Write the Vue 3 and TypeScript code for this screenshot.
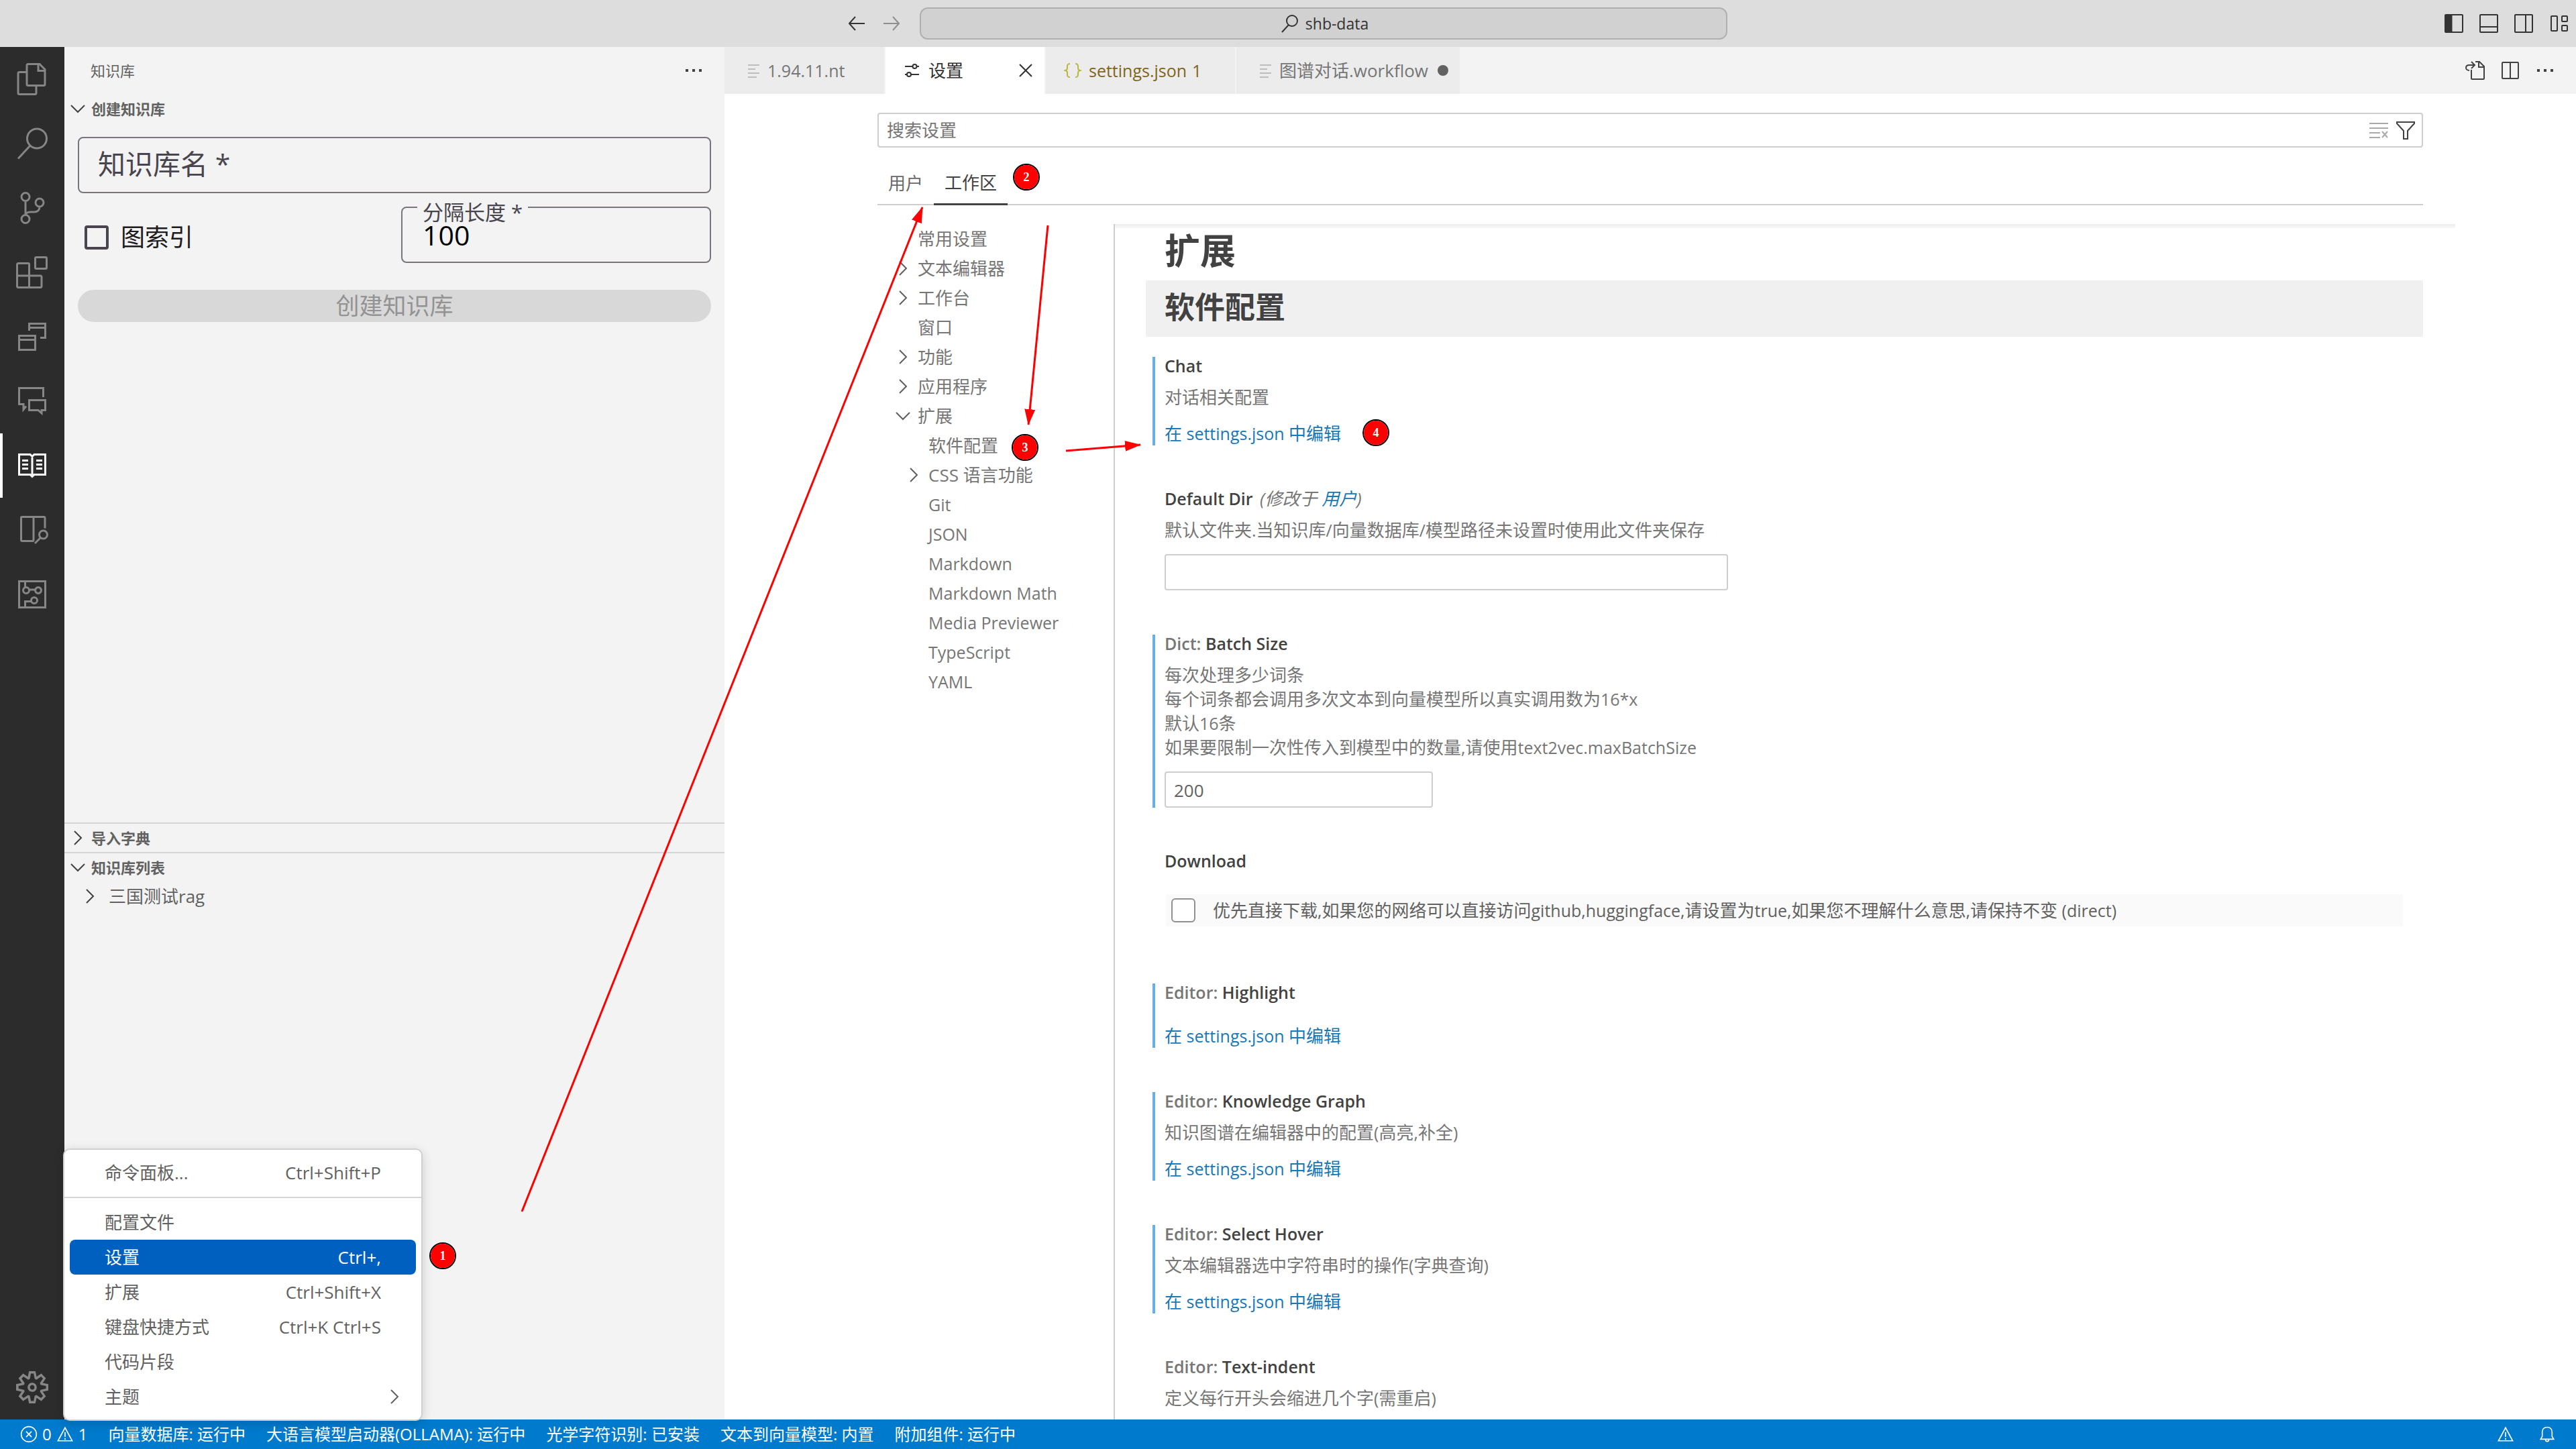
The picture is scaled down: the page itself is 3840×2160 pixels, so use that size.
<script setup lang="ts">
import { ref } from 'vue'

interface ActivityItem {
  name: string
  d: string
  active?: boolean
}
interface TocItem {
  label: string
  level: number
  state?: 'open' | 'closed'
}
interface Setting {
  id: string
  category?: string
  title: string
  scope?: string
  lines: string[]
  modified: boolean
  kind: 'link' | 'text' | 'number' | 'checkbox' | 'none'
}
interface Run {
  text: string
  latin: boolean
}

const ring = (x: number, y: number, r: number): string =>
  `M${x - r} ${y}a${r} ${r} 0 1 0 ${2 * r} 0a${r} ${r} 0 1 0 ${-2 * r} 0`

// Latin runs are set one size smaller than the Chinese around them
const runs = (text: string): Run[] =>
  (text.match(/[\x20-\x7e]+|[^\x20-\x7e]+/g) ?? []).map((part) => ({
    text: part,
    latin: /^[\x20-\x7e]/.test(part),
  }))
const isLatin = (text: string): boolean => /^[\x20-\x7e]+$/.test(text)

const activities: ActivityItem[] = [
  {
    name: '资源管理器',
    d: 'M18 1.5h17l8 8v22a2 2 0 0 1-2 2H18a2 2 0 0 1-2-2v-28a2 2 0 0 1 2-2zM33 1.5v10h10M16 13.5H5a2 2 0 0 0-2 2v29a2 2 0 0 0 2 2h23a2 2 0 0 0 2-2v-11',
  },
  { name: '搜索', d: ring(31, 16.5, 14.5) + 'M21 27L3 46.5' },
  {
    name: '源代码管理',
    d: ring(14, 7.5, 6) + ring(14, 40.5, 6) + ring(35, 16, 6) + 'M14 13.5v21M35 22c0 5-3 8-8 8h-6c-4 0-7 2-7 5',
  },
  {
    name: '扩展',
    d: 'M30 1.5h14a1.5 1.5 0 0 1 1.500 1.500v14a1.500 1.500 0 0 1-1.500 1.500H30a1.500 1.500 0 0 1-1.500-1.500V3a1.500 1.500 0 0 1 1.500-1.500zM3 10.500h15a1.500 1.500 0 0 1 1.500 1.500v17H36a2 2 0 0 1 2 2v13.500a2 2 0 0 1-2 2H3.500a2 2 0 0 1-2-2V12a1.500 1.500 0 0 1 1.500-1.500zM1.500 29h18v17.500',
  },
  {
    name: '窗口',
    d: 'M4.500 22.500h24v21h-24zM4.500 28.500h24M19.500 15V4.500h24v21H36M19.500 10.500h24',
  },
  {
    name: '评论',
    d: 'M40.500 18V4.500h-36v24H11v8l4-5M19.500 22.500h24v15H38v4.500l-5-4.500H19.500z',
  },
  {
    name: '知识库',
    active: true,
    d: 'M4.500 7.500h16.500l3 3 3-3h16.500v30H27l-3 3-3-3H4.500zM24 10v29M9 16.500h9M9 22.500h9M9 28.500h9M30 16.500h9M30 22.500h9M30 28.500h9',
  },
  {
    name: '知识检索',
    d: 'M26.500 40.500H9a1.500 1.500 0 0 1-1.500-1.500V6A1.500 1.500 0 0 1 9 4.500h32.500A1.500 1.500 0 0 1 43 6v15.500M26 4.500v36' + ring(40.5, 31, 6) + 'M36 36l-8 8',
  },
  {
    name: '知识图谱',
    d: 'M4.500 4.500h39v39h-39z' + ring(15, 18, 4.5) + ring(33, 18, 4.5) + ring(27, 33, 4.5) + 'M13.500 4.500v9M19.500 17h9M13.500 43.500V34.500h9',
  },
]

const gear =
  'M19.85 8.75l4.15.83v4.84l-4.15.83 2.35 3.52-3.43 3.43-3.52-2.35-.83 4.15H9.58l-.83-4.15-3.52 2.35-3.43-3.43 2.35-3.52L0 14.42V9.58l4.15-.83L1.8 5.23 5.23 1.8l3.52 2.35L9.58 0h4.84l.83 4.15 3.52-2.35 3.43 3.43-2.35 3.52zm-1.57 5.07l4-.81v-2l-4-.81-.54-1.3 2.29-3.43-1.43-1.43-3.43 2.29-1.3-.54-.81-4h-2l-.81 4-1.3.54-3.43-2.29-1.43 1.43L6.38 8.9l-.54 1.3-4 .81v2l4 .81.54 1.3-2.29 3.43 1.43 1.43 3.43-2.29 1.3.54.81 4h2l.81-4 1.3-.54 3.43 2.29 1.43-1.43-2.29-3.43.54-1.3zm-8.186-4.672A3.43 3.43 0 0 1 12 8.57 3.44 3.44 0 0 1 15.43 12a3.43 3.43 0 1 1-5.336-2.852zm.956 4.274c.281.188.612.288.95.288A1.7 1.7 0 0 0 13.71 12a1.71 1.71 0 1 0-2.66 1.422z'

const chevronRight = 'M11 6l10 10-10 10'
const chevronDown = 'M6 11l10 10 10-10'
const dots = 'M4 16h4M14 16h4M24 16h4'
const warning = 'M16 4L3 28h26zM16 12v9M16 23v3'

const layoutIcons = [
  { name: '切换主侧栏', d: 'M4 3h24a1 1 0 0 1 1 1v24a1 1 0 0 1-1 1H4a1 1 0 0 1-1-1V4a1 1 0 0 1 1-1zM8 3v26M5 3v26M11 3v26M12.500 3v26M6.500 3v26M9.500 3v26' },
  { name: '切换面板', d: 'M4 3h24a1 1 0 0 1 1 1v24a1 1 0 0 1-1 1H4a1 1 0 0 1-1-1V4a1 1 0 0 1 1-1zM3 21h26' },
  { name: '切换辅助侧栏', d: 'M4 3h24a1 1 0 0 1 1 1v24a1 1 0 0 1-1 1H4a1 1 0 0 1-1-1V4a1 1 0 0 1 1-1zM19 3v26' },
  { name: '自定义布局', d: 'M6 5h7a1 1 0 0 1 1 1v20a1 1 0 0 1-1 1H6a1 1 0 0 1-1-1V6a1 1 0 0 1 1-1zM22 5h6a1 1 0 0 1 1 1v6a1 1 0 0 1-1 1h-6a1 1 0 0 1-1-1V6a1 1 0 0 1 1-1zM22 19h6a1 1 0 0 1 1 1v6a1 1 0 0 1-1 1h-6a1 1 0 0 1-1-1v-6a1 1 0 0 1 1-1z' },
]

const textLines = 'M11 8h17M11 14h11M11 20h17M11 26h13'
const tabs = [
  { label: '1.94.11.nt', kind: 'lines', width: 240 },
  { label: '设置', kind: 'active', width: 239 },
  { label: 'settings.json', kind: 'json', width: 284, count: 1 },
  { label: '图谱对话.workflow', kind: 'dirty', width: 335 },
]

const toc: TocItem[] = [
  { label: '常用设置', level: 0 },
  { label: '文本编辑器', level: 0, state: 'closed' },
  { label: '工作台', level: 0, state: 'closed' },
  { label: '窗口', level: 0 },
  { label: '功能', level: 0, state: 'closed' },
  { label: '应用程序', level: 0, state: 'closed' },
  { label: '扩展', level: 0, state: 'open' },
  { label: '软件配置', level: 1 },
  { label: 'CSS 语言功能', level: 1, state: 'closed' },
  { label: 'Git', level: 1 },
  { label: 'JSON', level: 1 },
  { label: 'Markdown', level: 1 },
  { label: 'Markdown Math', level: 1 },
  { label: 'Media Previewer', level: 1 },
  { label: 'TypeScript', level: 1 },
  { label: 'YAML', level: 1 },
]

const settings: Setting[] = [
  { id: 'chat', title: 'Chat', lines: ['对话相关配置'], modified: true, kind: 'link' },
  {
    id: 'default-dir',
    title: 'Default Dir',
    scope: '用户',
    lines: ['默认文件夹.当知识库/向量数据库/模型路径未设置时使用此文件夹保存'],
    modified: false,
    kind: 'text',
  },
  {
    id: 'batch-size',
    category: 'Dict:',
    title: 'Batch Size',
    lines: [
      '每次处理多少词条',
      '每个词条都会调用多次文本到向量模型所以真实调用数为16*x',
      '默认16条',
      '如果要限制一次性传入到模型中的数量,请使用text2vec.maxBatchSize',
    ],
    modified: true,
    kind: 'number',
  },
  {
    id: 'download',
    title: 'Download',
    lines: ['优先直接下载,如果您的网络可以直接访问github,huggingface,请设置为true,如果您不理解什么意思,请保持不变 (direct)'],
    modified: false,
    kind: 'checkbox',
  },
  { id: 'highlight', category: 'Editor:', title: 'Highlight', lines: [], modified: true, kind: 'link' },
  {
    id: 'knowledge-graph',
    category: 'Editor:',
    title: 'Knowledge Graph',
    lines: ['知识图谱在编辑器中的配置(高亮,补全)'],
    modified: true,
    kind: 'link',
  },
  {
    id: 'select-hover',
    category: 'Editor:',
    title: 'Select Hover',
    lines: ['文本编辑器选中字符串时的操作(字典查询)'],
    modified: true,
    kind: 'link',
  },
  {
    id: 'text-indent',
    category: 'Editor:',
    title: 'Text-indent',
    lines: ['定义每行开头会缩进几个字(需重启)'],
    modified: false,
    kind: 'none',
  },
]

const menu = [
  { label: '命令面板...', keys: 'Ctrl+Shift+P', divider: true },
  { label: '配置文件', keys: '' },
  { label: '设置', keys: 'Ctrl+,', selected: true },
  { label: '扩展', keys: 'Ctrl+Shift+X' },
  { label: '键盘快捷方式', keys: 'Ctrl+K Ctrl+S' },
  { label: '代码片段', keys: '' },
  { label: '主题', keys: '', submenu: true },
]

const statuses = [
  '向量数据库: 运行中',
  '大语言模型启动器(OLLAMA): 运行中',
  '光学字符识别: 已安装',
  '文本到向量模型: 内置',
  '附加组件: 运行中',
]

const arrows = [
  { x1: 778, y1: 1806, x2: 1375, y2: 309 },
  { x1: 1562, y1: 336, x2: 1533, y2: 633 },
  { x1: 1589, y1: 672, x2: 1700, y2: 663 },
]
const steps = [
  { n: 1, x: 660, y: 1872 },
  { n: 2, x: 1530, y: 264 },
  { n: 3, x: 1528, y: 667 },
  { n: 4, x: 2051, y: 645 },
]

const baseName = ref('')
const chunkLength = ref('100')
const graphIndex = ref(false)
const search = ref('')
const defaultDir = ref('')
const batchSize = ref('200')
const direct = ref(false)
</script>

<template>
  <div class="app">
    <header class="titlebar">
      <div class="title-center">
        <nav class="history" aria-label="历史">
          <button type="button" aria-label="后退">
            <svg class="icon" viewBox="4 4 24 24"><path d="M28 16H5M14 6L5 16l9 10" /></svg>
          </button>
          <button type="button" aria-label="前进" class="faded">
            <svg class="icon" viewBox="4 4 24 24"><path d="M4 16h23M18 6l9 10-9 10" /></svg>
          </button>
        </nav>
        <button type="button" class="command">
          <svg class="icon" viewBox="0 0 32 32"><path :d="ring(20, 12, 8) + 'M15 18L5 29'" /></svg>
          <span>shb-data</span>
        </button>
      </div>
      <div class="layout-controls">
        <button v-for="item in layoutIcons" :key="item.name" type="button" :aria-label="item.name">
          <svg class="icon" viewBox="0 0 32 32"><path :d="item.d" /></svg>
        </button>
      </div>
    </header>

    <div class="workbench">
      <nav class="activity" aria-label="活动栏">
        <button
          v-for="item in activities"
          :key="item.name"
          type="button"
          :class="{ active: item.active }"
          :aria-label="item.name"
        >
          <svg viewBox="0 0 48 48"><path :d="item.d" /></svg>
        </button>
        <button type="button" class="manage" aria-label="管理">
          <svg viewBox="0 0 24 24"><path :d="gear" fill-rule="evenodd" /></svg>
        </button>
      </nav>

      <aside class="sidebar">
        <div class="side-title">
          <h2>知识库</h2>
          <button type="button" aria-label="更多">
            <svg class="icon thick" viewBox="0 0 32 32"><path :d="dots" /></svg>
          </button>
        </div>

        <section class="pane pane-create">
          <h3><svg class="icon" viewBox="0 0 32 32"><path :d="chevronDown" /></svg>创建知识库</h3>
          <form class="create-form" @submit.prevent>
            <div class="field">
              <input id="base-name" v-model="baseName" type="text" />
              <label for="base-name">知识库名 *</label>
            </div>
            <div class="form-row">
              <label class="check" for="graph-index">
                <input id="graph-index" v-model="graphIndex" type="checkbox" />
                图索引
              </label>
              <div class="field filled">
                <input id="chunk-length" v-model="chunkLength" type="text" />
                <label for="chunk-length">分隔长度 *</label>
              </div>
            </div>
            <button class="submit" type="submit" disabled>创建知识库</button>
          </form>
        </section>

        <section class="pane">
          <h3><svg class="icon" viewBox="0 0 32 32"><path :d="chevronRight" /></svg>导入字典</h3>
        </section>

        <section class="pane pane-list">
          <h3><svg class="icon" viewBox="0 0 32 32"><path :d="chevronDown" /></svg>知识库列表</h3>
          <div class="tree-row">
            <svg class="icon" viewBox="0 0 32 32"><path :d="chevronRight" /></svg>
            <span>三国测试rag</span>
          </div>
        </section>
      </aside>

      <main class="editor">
        <div class="tabbar">
          <div
            v-for="tab in tabs"
            :key="tab.label"
            class="tab"
            :class="tab.kind"
            :style="{ width: tab.width + 'px' }"
          >
            <svg v-if="tab.kind === 'active'" class="icon" viewBox="0 0 32 32">
              <path :d="'M5 10h12M22 10h4' + ring(19.5, 10, 3) + 'M5 22h3M14 22h12' + ring(11, 22, 3)" />
            </svg>
            <svg v-else-if="tab.kind === 'json'" class="icon" viewBox="0 0 32 32">
              <path d="M12 6c-4 0-4 2-4 5s0 4-3 5c3 1 3 2 3 5s0 5 4 5M20 6c4 0 4 2 4 5s0 4 3 5c-3 1-3 2-3 5s0 5-4 5" />
            </svg>
            <svg v-else class="icon" viewBox="0 0 32 32"><path :d="textLines" /></svg>
            <span :class="{ latin: isLatin(tab.label) }">{{ tab.label }}</span>
            <span v-if="tab.count" class="latin">{{ tab.count }}</span>
            <button v-if="tab.kind === 'active'" type="button" class="close" aria-label="关闭">
              <svg class="icon" viewBox="0 0 32 32"><path d="M7 7l18 18M25 7L7 25" /></svg>
            </button>
            <span v-if="tab.kind === 'dirty'" class="dot"></span>
          </div>
          <div class="tab-actions">
            <button type="button" aria-label="打开设置(JSON)">
              <svg class="icon" viewBox="0 0 32 32">
                <path d="M10 15v13a1 1 0 0 0 1 1h17a1 1 0 0 0 1-1V10l-7-7h-6M21 3v8h8M7 16c-3 0-5-2-5-4 0-3 2-4 5-4h7M10 3l5 5-5 5" />
              </svg>
            </button>
            <button type="button" aria-label="拆分编辑器">
              <svg class="icon" viewBox="0 0 32 32">
                <path d="M5 4h22a1 1 0 0 1 1 1v22a1 1 0 0 1-1 1H5a1 1 0 0 1-1-1V5a1 1 0 0 1 1-1zM16 4v24" />
              </svg>
            </button>
            <button type="button" aria-label="更多操作">
              <svg class="icon thick" viewBox="0 0 32 32"><path :d="dots" /></svg>
            </button>
          </div>
        </div>

        <div class="settings">
          <div class="search">
            <input v-model="search" type="text" aria-label="搜索设置" placeholder="搜索设置" />
            <button type="button" class="faded" aria-label="清除">
              <svg class="icon" viewBox="0 0 32 32"><path d="M2 6h28M2 13h28M2 20h16M2 27h16M21 18l8 9M29 18l-8 9" /></svg>
            </button>
            <button type="button" aria-label="筛选">
              <svg class="icon" viewBox="0 0 32 32"><path d="M3 4h26v2L19 17v12h-6V17L3 6z" /></svg>
            </button>
          </div>
          <div class="scopes">
            <button type="button">用户</button>
            <button type="button" class="current">工作区</button>
          </div>

          <div class="settings-body">
            <ul class="toc">
              <li v-for="item in toc" :key="item.label" :class="{ nested: item.level === 1 }">
                <svg class="icon" viewBox="0 0 32 32">
                  <path v-if="item.state" :d="item.state === 'open' ? chevronDown : chevronRight" />
                </svg>
                <span :class="{ latin: isLatin(item.label) }">{{ item.label }}</span>
              </li>
            </ul>

            <div class="list">
              <div class="scroll-shadow"></div>
              <h1>扩展</h1>
              <h2>软件配置</h2>
              <section v-for="item in settings" :key="item.id" class="setting" :class="{ modified: item.modified }">
                <h4>
                  <span v-if="item.category" class="category">{{ item.category }}&nbsp;</span>{{ item.title }}
                  <em v-if="item.scope">(修改于 <a href="#">{{ item.scope }}</a>)</em>
                </h4>
                <label v-if="item.kind === 'checkbox'" class="toggle">
                  <input v-model="direct" type="checkbox" />
                  <span><span v-for="(run, i) in runs(item.lines[0])" :key="i" :class="{ latin: run.latin }">{{ run.text }}</span></span>
                </label>
                <template v-else>
                  <label class="description" :for="item.id">
                    <span v-for="line in item.lines" :key="line" class="line"><span v-for="(run, i) in runs(line)" :key="i" :class="{ latin: run.latin }">{{ run.text }}</span></span>
                  </label>
                  <a v-if="item.kind === 'link'" :id="item.id" class="edit" href="#">在<span class="latin"> settings.json </span>中编辑</a>
                  <input v-if="item.kind === 'text'" :id="item.id" v-model="defaultDir" type="text" />
                  <input v-if="item.kind === 'number'" :id="item.id" v-model="batchSize" class="short" type="text" />
                </template>
              </section>
            </div>
          </div>
        </div>
      </main>
    </div>

    <footer class="status">
      <span class="problems">
        <svg class="icon" viewBox="0 0 32 32"><path :d="ring(16, 16, 14) + 'M11 11l10 10M21 11L11 21'" /></svg>
        <span>0</span>
        <svg class="icon" viewBox="0 0 32 32"><path :d="warning" /></svg>
        <span>1</span>
      </span>
      <span v-for="text in statuses" :key="text">{{ text }}</span>
      <span class="status-right">
        <svg class="icon" viewBox="0 0 32 32"><path :d="warning" /></svg>
        <svg class="icon" viewBox="0 0 32 32">
          <path d="M4 25h24l-3-5v-8c0-6-4-9-9-9s-9 3-9 9v8zM13 26c0 4 6 4 6 0" />
        </svg>
      </span>
    </footer>

    <div class="menu" role="menu">
      <template v-for="item in menu" :key="item.label">
        <button type="button" role="menuitem" :class="{ selected: item.selected }">
          <span>{{ item.label }}</span>
          <span class="keys">{{ item.keys }}</span>
          <svg class="icon" viewBox="0 0 32 32"><path v-if="item.submenu" :d="chevronRight" /></svg>
        </button>
        <hr v-if="item.divider" />
      </template>
    </div>

    <svg class="guide">
      <defs>
        <marker id="head" markerWidth="24" markerHeight="16" refX="23" refY="8" orient="auto" markerUnits="userSpaceOnUse">
          <path d="M0 0l24 8-24 8z" fill="#ff0000" />
        </marker>
      </defs>
      <line
        v-for="a in arrows"
        :key="a.x1"
        :x1="a.x1"
        :y1="a.y1"
        :x2="a.x2"
        :y2="a.y2"
        marker-end="url(#head)"
      />
      <g v-for="s in steps" :key="s.n">
        <circle :cx="s.x" :cy="s.y" r="19" class="outer" />
        <circle :cx="s.x" :cy="s.y" r="18" class="inner" />
        <text :x="s.x" :y="s.y + 6">{{ s.n }}</text>
      </g>
    </svg>
  </div>
</template>

<style>
body {
  margin: 0;
}
</style>

<style scoped>
.app {
  position: relative;
  display: flex;
  flex-direction: column;
  min-height: 100vh;
  overflow: hidden;
  background: #ffffff;
  color: #616161;
  font-family: 'Open Sans', 'Noto Sans CJK SC', sans-serif;
  font-size: 26px;
  line-height: 36px;
}
.app *,
.app *::before {
  box-sizing: border-box;
}
h1,
h2,
h3,
h4,
ul {
  margin: 0;
  padding: 0;
}
button {
  padding: 0;
  border: 0;
  background: none;
  color: inherit;
  font: inherit;
}
input {
  margin: 0;
  font: inherit;
}
a {
  color: #1878b8;
  text-decoration: none;
}
.latin {
  font-size: 25px;
  white-space: pre-wrap;
}
.icon {
  display: block;
  flex: none;
  width: 32px;
  height: 32px;
  fill: none;
  stroke: currentColor;
  stroke-width: 2;
}
.icon.thick {
  stroke-width: 4;
}

/* title bar */
.titlebar {
  display: grid;
  grid-template-columns: 1fr 1310px 1fr;
  align-items: center;
  height: 70px;
  background: #dddddd;
  color: #333333;
}
.title-center {
  display: flex;
  grid-column: 2;
}
.history {
  display: flex;
  flex: 1;
  align-items: center;
  gap: 28px;
}
.history .icon {
  width: 24px;
  height: 24px;
}
.faded {
  opacity: 0.45;
}
.command {
  display: flex;
  align-items: center;
  justify-content: center;
  gap: 8px;
  width: 1204px;
  height: 48px;
  border: 2px solid #b0b0b0;
  border-radius: 12px;
  background: #d1d1d1;
  font-size: 23px;
}
.layout-controls {
  display: flex;
  justify-content: flex-end;
  gap: 20px;
  padding-right: 10px;
}

/* activity bar */
.workbench {
  display: flex;
  flex: 1;
}
.activity {
  display: flex;
  flex: none;
  flex-direction: column;
  width: 96px;
  background: #2c2c2c;
  color: #868686;
}
.activity button {
  display: flex;
  align-items: center;
  justify-content: center;
  height: 96px;
  border-right: 4px solid transparent;
  border-left: 4px solid transparent;
}
.activity button.active {
  border-left-color: #ffffff;
  color: #ffffff;
}
.activity svg {
  width: 48px;
  height: 48px;
  fill: none;
  stroke: currentColor;
  stroke-width: 3;
}
.activity .manage {
  margin-top: auto;
}
.activity .manage svg {
  fill: currentColor;
  stroke: none;
}

/* side bar */
.sidebar {
  display: flex;
  flex: none;
  flex-direction: column;
  width: 984px;
  background: #f3f3f3;
}
.side-title {
  display: flex;
  align-items: center;
  justify-content: space-between;
  height: 70px;
  padding: 0 30px 0 39px;
}
.side-title h2 {
  font-size: 22px;
  font-weight: 400;
}
.side-title button {
  color: #424242;
}
.pane + .pane {
  border-top: 2px solid #d6d6d6;
}
.pane-create {
  flex: 9 1 0;
}
.pane-list {
  flex: 7 1 0;
}
.pane h3 {
  display: flex;
  align-items: center;
  gap: 4px;
  height: 44px;
  padding-left: 4px;
  font-size: 22px;
  font-weight: 700;
}
.pane + .pane h3 {
  height: 42px;
}
.pane .icon {
  color: #424242;
}
.tree-row {
  display: flex;
  align-items: center;
  gap: 12px;
  height: 44px;
  padding-left: 22px;
}
.create-form {
  display: flex;
  flex-direction: column;
  gap: 20px;
  padding: 20px;
  color: #1d1b20;
}
.form-row {
  display: grid;
  grid-template-columns: 1fr 1fr;
  gap: 20px;
}
.field {
  position: relative;
}
.field input {
  display: block;
  width: 100%;
  height: 84px;
  padding: 0 30px;
  border: 2px solid #79747e;
  border-radius: 8px;
  background: transparent;
  color: #000000;
  font-size: 41px;
}
.field label {
  position: absolute;
  top: 16px;
  left: 30px;
  color: #49454f;
  font-size: 41px;
  line-height: 48px;
}
.field.filled label {
  top: -8px;
  left: 24px;
  padding: 0 8px;
  background: #f3f3f3;
  font-size: 31px;
  line-height: 32px;
}
.check {
  display: flex;
  align-items: center;
  gap: 18px;
  padding: 8px 10px 0;
  font-size: 36px;
}
.check input,
.toggle input {
  flex: none;
  width: 36px;
  height: 36px;
  border: 4px solid #49454f;
  border-radius: 4px;
  appearance: none;
}
.submit {
  height: 48px;
  margin-top: 20px;
  border-radius: 24px;
  background: #d8d8d8;
  color: #939393;
  font-size: 35px;
}

/* editor tabs */
.editor {
  display: flex;
  flex: 1;
  flex-direction: column;
  min-width: 0;
}
.tabbar {
  display: flex;
  height: 70px;
  background: #f3f3f3;
}
.tab {
  display: flex;
  align-items: center;
  gap: 8px;
  padding: 0 12px 0 24px;
  border-right: 2px solid #f3f3f3;
  background: #ececec;
  color: #767676;
  white-space: nowrap;
}
.tab.lines .icon,
.tab.dirty .icon {
  color: #bdbdbd;
}
.tab.active {
  background: #ffffff;
  color: #333333;
}
.tab.json {
  color: #80661c;
}
.tab.json .icon {
  color: #b7b73b;
}
.close {
  margin-left: auto;
}
.dot {
  flex: none;
  width: 16px;
  height: 16px;
  margin-left: 6px;
  border-radius: 8px;
  background: #616161;
}
.tab-actions {
  display: flex;
  align-items: center;
  gap: 20px;
  margin-left: auto;
  padding-right: 30px;
  color: #424242;
}

/* settings editor */
.settings {
  display: flex;
  flex: 1;
  flex-direction: column;
  box-sizing: border-box;
  width: 100%;
  max-width: 2400px;
  margin: 0 auto;
  padding: 28px 48px 0;
}
.search {
  display: flex;
  align-items: center;
  gap: 8px;
  height: 52px;
  padding: 0 8px 0 12px;
  border: 2px solid #cecece;
  border-radius: 4px;
  color: #424242;
}
.search input {
  flex: 1;
  padding: 0;
  border: 0;
  background: none;
  outline: none;
}
.search input::placeholder {
  color: #767676;
  opacity: 1;
}
.scopes {
  display: flex;
  height: 66px;
  margin-top: 20px;
  border-bottom: 2px solid #cecece;
}
.scopes button {
  height: 66px;
  padding: 0 16px;
  color: #6a6a6a;
}
.scopes .current {
  border-bottom: 3px solid #424242;
  color: #424242;
}
.settings-body {
  display: flex;
  flex: 1;
  margin-top: 28px;
}
.toc {
  flex: none;
  width: 352px;
  color: #767676;
  list-style: none;
}
.toc li {
  display: flex;
  align-items: center;
  gap: 6px;
  height: 44px;
  padding-left: 22px;
}
.toc li.nested {
  padding-left: 38px;
}
.toc .icon {
  color: #5f5f5f;
}
.list {
  position: relative;
  flex: 1;
  min-width: 0;
  padding-left: 46px;
  border-left: 2px solid #cecece;
}
.scroll-shadow {
  position: absolute;
  top: 0;
  right: -48px;
  left: 0;
  height: 6px;
  background: linear-gradient(#ececec, #f8f8f8);
}
.list h1,
.list h2 {
  padding: 0 0 4px 28px;
  color: #424242;
  font-weight: 700;
  line-height: 80px;
}
.list h1 {
  font-size: 53px;
}
.list h2 {
  margin-bottom: 30px;
  background: #f0f0f0;
  font-size: 45px;
}
.setting {
  margin: 0 30px 66px 10px;
  padding-left: 14px;
  border-left: 4px solid transparent;
}
.setting:last-child {
  margin-bottom: 0;
}
.setting.modified {
  border-left-color: #66afe0;
}
.setting h4 {
  margin-bottom: 16px;
  color: #424242;
  font-size: 25px;
  font-weight: 600;
  line-height: 26px;
}
.category {
  color: #767676;
}
.setting em {
  margin-left: 4px;
  color: #767676;
  font-size: 26px;
  font-weight: 400;
}
.description {
  display: block;
  padding-bottom: 18px;
  color: #767676;
}
.setting:last-child .description {
  padding-bottom: 0;
}
.description .line {
  display: block;
  height: 36px;
}
.edit {
  display: block;
  height: 36px;
}
.setting input[type='text'] {
  display: block;
  width: 840px;
  height: 54px;
  padding: 2px 12px 0;
  border: 2px solid #cecece;
  border-radius: 4px;
  background: #ffffff;
  color: #616161;
}
.setting input.short {
  width: 400px;
}
.toggle {
  display: flex;
  align-items: center;
  gap: 26px;
  height: 48px;
  margin: 37px 0 85px 2px;
  padding-left: 8px;
  background: #fafafa;
}
.toggle input {
  border: 2px solid #919191;
  border-radius: 6px;
  background: #ffffff;
}

/* status bar */
.status {
  display: flex;
  align-items: center;
  gap: 31px;
  height: 44px;
  padding: 0 30px;
  background: #007acc;
  color: #ffffff;
  font-size: 24px;
}
.problems {
  display: flex;
  align-items: center;
  gap: 7px;
}
.problems .icon,
.status-right .icon {
  width: 26px;
  height: 26px;
}
.status-right {
  display: flex;
  gap: 36px;
  margin-left: auto;
}

/* manage menu */
.menu {
  position: absolute;
  bottom: 42px;
  left: 94px;
  width: 536px;
  padding: 8px 0;
  border: 2px solid #d0d0d0;
  border-radius: 10px;
  background: #ffffff;
  box-shadow: 0 4px 16px rgba(0, 0, 0, 0.16);
}
.menu button {
  display: flex;
  align-items: center;
  width: 516px;
  height: 52px;
  margin: 0 8px;
  padding: 0 16px 0 52px;
  border-radius: 8px;
}
.menu .selected {
  background: #0060c0;
  color: #ffffff;
}
.menu .keys {
  margin-left: auto;
}
.menu .icon {
  margin-left: 4px;
}
.menu hr {
  height: 2px;
  margin: 10px 0;
  border: 0;
  background: #d4d4d4;
}

/* walkthrough arrows and step numbers */
.guide {
  position: absolute;
  inset: 0;
  width: 100%;
  height: 100%;
  pointer-events: none;
}
.guide line {
  stroke: #ff0000;
  stroke-width: 3;
}
.guide .outer {
  fill: #ffffff;
  stroke: #000000;
  stroke-width: 2;
}
.guide .inner {
  fill: #ff0000;
}
.guide text {
  fill: #ffffff;
  font-family: 'Liberation Serif', serif;
  font-size: 18px;
  font-weight: 700;
  text-anchor: middle;
}
</style>
